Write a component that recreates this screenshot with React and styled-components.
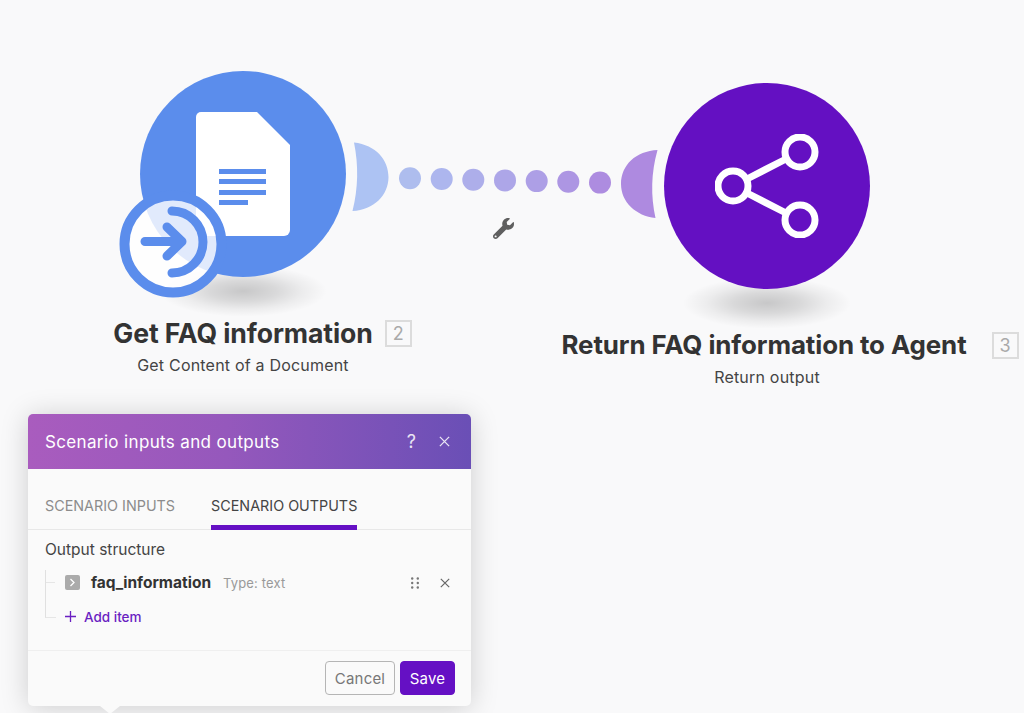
import styled, { createGlobalStyle } from "styled-components";
import { FaWrench } from "react-icons/fa";

const GlobalStyle = createGlobalStyle`
  html, body {
    margin: 0;
    background: #f9f9fa;
    overflow: hidden;
    font-family: Inter, "Liberation Sans", sans-serif;
  }
`;

const Canvas = styled.div`
  position: relative;
  width: 1024px;
  height: 713px;
  overflow: hidden;
  background: #f9f9fa;
  color: #333;
`;

const Node = styled.div`
  position: absolute;
  left: ${(p) => p.$left}px;
  top: ${(p) => p.$top}px;
  width: 206px;
  display: flex;
  flex-direction: column;
  align-items: center;
`;

const Circle = styled.div`
  position: relative;
  z-index: 1;
  width: 206px;
  height: 206px;
  border-radius: 50%;
  background: ${(p) => p.$color};
  display: flex;
  align-items: center;
  justify-content: center;
`;

const Shadow = styled.div`
  width: 170px;
  height: 52px;
  margin-top: -12px;
  border-radius: 50%;
  background: radial-gradient(
    ellipse at center,
    rgba(0, 0, 0, 0.2) 0%,
    rgba(0, 0, 0, 0.13) 28%,
    rgba(0, 0, 0, 0.05) 50%,
    rgba(0, 0, 0, 0) 70%
  );
`;

const Badge = styled.svg`
  position: absolute;
  left: -21px;
  top: 119px;
  width: 108px;
  height: 108px;
`;

const Title = styled.div`
  position: relative;
  left: ${(p) => p.$shift}px;
  font-size: ${(p) => p.$size}px;
  line-height: 32px;
  font-weight: 700;
  letter-spacing: -0.1px;
  white-space: nowrap;
`;

const NumberTag = styled.span`
  position: absolute;
  left: 100%;
  top: 3px;
  margin-left: ${(p) => p.$gap}px;
  width: 27px;
  height: 27px;
  box-sizing: border-box;
  border: 2px solid #dcdcdc;
  color: #aaa;
  font-size: 18px;
  font-weight: 400;
  letter-spacing: 0;
  display: flex;
  align-items: center;
  justify-content: center;
`;

const Subtitle = styled.div`
  margin-top: 6px;
  font-size: 16px;
  line-height: 20px;
  color: #444;
  letter-spacing: 0.2px;
  white-space: nowrap;
`;

const Connector = styled.svg`
  position: absolute;
  left: 340px;
  top: 130px;
  width: 330px;
  height: 100px;
`;

const Wrench = styled(FaWrench)`
  position: absolute;
  left: 493px;
  top: 218px;
  width: 21px;
  height: 21px;
  color: #5f5f5f;
`;

const Dialog = styled.section`
  position: absolute;
  left: 28px;
  top: 414px;
  width: 443px;
  height: 292px;
  display: flex;
  flex-direction: column;
  background: #fafafa;
  border-radius: 5px;
  box-shadow: 0 2px 28px rgba(0, 0, 0, 0.18);

  &::after {
    content: "";
    position: absolute;
    left: 72px;
    top: 100%;
    border-left: 10px solid transparent;
    border-right: 10px solid transparent;
    border-top: 8px solid #fafafa;
  }
`;

const DialogHeader = styled.header`
  height: 55px;
  flex: none;
  padding: 0 21px 0 17px;
  display: flex;
  align-items: center;
  justify-content: space-between;
  border-radius: 5px 5px 0 0;
  background: linear-gradient(90deg, #a95cbe 0%, #9558bc 45%, #6a4fb6 100%);
  color: #fff;
`;

const DialogTitle = styled.h2`
  margin: 0;
  font-size: 17px;
  font-weight: 400;
  letter-spacing: 0.35px;
`;

const HeaderActions = styled.div`
  display: flex;
  align-items: center;
  gap: 23px;
  opacity: 0.85;
  font-size: 18px;
`;

const Tabs = styled.nav`
  height: 61px;
  flex: none;
  padding: 0 17px;
  box-sizing: border-box;
  display: flex;
  align-items: flex-end;
  gap: 36px;
  border-bottom: 1px solid #e8e8e8;
`;

const Tab = styled.div`
  height: 40px;
  box-sizing: border-box;
  border-bottom: 5px solid ${(p) => (p.$active ? "#6510c4" : "transparent")};
  margin-bottom: -1px;
  font-size: 14.35px;
  line-height: 32px;
  color: ${(p) => (p.$active ? "#444" : "#8c8c8c")};
  white-space: nowrap;
`;

const Body = styled.div`
  flex: 1;
  padding: 10px 17px 0;
`;

const SectionLabel = styled.div`
  font-size: 15.5px;
  line-height: 20px;
  color: #444;
`;

const Tree = styled.div`
  position: relative;
  margin-top: 10px;
  padding-left: 20px;

  &::before {
    content: "";
    position: absolute;
    left: 0;
    top: 0;
    width: 10px;
    height: 47px;
    border-left: 1px solid #e0e0e0;
    border-bottom: 1px solid #e6e6e6;
  }
`;

const ItemRow = styled.div`
  position: relative;
  height: 25px;
  display: flex;
  align-items: center;
  padding-right: 4px;

  &::before {
    content: "";
    position: absolute;
    left: -19px;
    top: 12px;
    width: 9px;
    border-top: 1px solid #e6e6e6;
  }
`;

const Toggle = styled.span`
  width: 15px;
  height: 15px;
  border-radius: 2px;
  background: #ababab;
  margin-right: 11px;
  display: flex;
  align-items: center;
  justify-content: center;
`;

const ItemName = styled.span`
  font-size: 15.5px;
  font-weight: 700;
  color: #333;
`;

const ItemType = styled.span`
  margin-left: 12px;
  font-size: 13px;
  color: #999;
  letter-spacing: 0.15px;
`;

const ItemActions = styled.div`
  margin-left: auto;
  display: flex;
  align-items: center;
  gap: 21px;
`;

const AddItem = styled.div`
  margin-top: 9px;
  height: 25px;
  display: flex;
  align-items: center;
  gap: 8px;
  color: #6a1fc2;
  font-size: 13.5px;
  font-weight: 500;
`;

const Footer = styled.footer`
  height: 56px;
  flex: none;
  box-sizing: border-box;
  padding: 10px 16px 0 0;
  border-top: 1px solid #efefef;
  display: flex;
  justify-content: flex-end;
  gap: 5px;
`;

const Button = styled.button`
  height: 34px;
  width: ${(p) => p.$width}px;
  padding: 0;
  box-sizing: border-box;
  border-radius: 4px;
  border: 1px solid ${(p) => (p.$primary ? "#6510c4" : "#b5b5b5")};
  background: ${(p) => (p.$primary ? "#6510c4" : "#fafafa")};
  color: ${(p) => (p.$primary ? "#fff" : "#777")};
  font-family: inherit;
  font-size: 15px;
  letter-spacing: 0.2px;
`;

const dots = [
  { x: 70, y: 48.3, fill: "#aebdee" },
  { x: 101.7, y: 49, fill: "#adb6ee" },
  { x: 133.3, y: 49.7, fill: "#adaeea" },
  { x: 165, y: 50.4, fill: "#ada6e8" },
  { x: 196.7, y: 51.1, fill: "#ad9fe6" },
  { x: 228.3, y: 51.8, fill: "#ad96e3" },
  { x: 260, y: 52.6, fill: "#ad8ce0" },
];

const CloseIcon = ({ size, color }) => (
  <svg width={size} height={size} viewBox="0 0 10 10" fill="none" stroke={color} strokeWidth="1.2">
    <path d="M0.8 0.8 9.2 9.2M9.2 0.8 0.8 9.2" />
  </svg>
);

export default function App() {
  return (
    <Canvas>
      <GlobalStyle />

      <Connector viewBox="340 130 330 100">
        <path d="M354 142.5 C376 145 388.5 160 388.5 177 C388.5 195 374 210 352.5 211 Q361 177 354 142.5 Z" fill="#adc3f3" />
        <path d="M657.5 150 C636 151 621 165 621 184 C621 202 636 216 655.5 218 Q648 184 657.5 150 Z" fill="#ae8ae0" />
        <g transform="translate(340 130)">
          {dots.map((d) => (
            <circle key={d.x} cx={d.x} cy={d.y} r="11" fill={d.fill} />
          ))}
        </g>
      </Connector>
      <Wrench />

      <Node $left={140} $top={71}>
        <Circle $color="#5b8dec">
          <svg width="94" height="124" viewBox="0 0 94 124">
            <path d="M5 0H61L94 33V118a6 6 0 0 1-6 6H6a6 6 0 0 1-6-6V5a5 5 0 0 1 5-5Z" fill="#fff" />
            <path d="M23 57h47v5H23zM23 67h47v5H23zM23 78h47v5H23zM23 88h29v5H23z" fill="#5b8dec" />
          </svg>
          <Badge viewBox="0 0 108 108">
            <circle cx="54" cy="54" r="48.5" fill="rgba(255,255,255,0.82)" stroke="#5b8dec" strokeWidth="10" />
            <g fill="none" stroke="#5b8dec" strokeWidth="9" strokeLinecap="round" strokeLinejoin="round">
              <path d="M26 51.5H63M48 37 63 51.5 48 66" />
              <path d="M53 21A31 31 0 0 1 53 83" />
            </g>
          </Badge>
        </Circle>
        <Shadow />
        <Title $shift={0} $size={26.6}>
          Get FAQ information
          <NumberTag $gap={12}>2</NumberTag>
        </Title>
        <Subtitle>Get Content of a Document</Subtitle>
      </Node>

      <Node $left={664} $top={83}>
        <Circle $color="#6410c2">
          <svg width="104" height="104" viewBox="0 0 104 104" fill="none" stroke="#fff" strokeWidth="7">
            <circle cx="85" cy="18" r="15" />
            <circle cx="18" cy="52" r="15" />
            <circle cx="85" cy="86" r="15" />
            <path d="M32 45 71 25M32 59 71 79" />
          </svg>
        </Circle>
        <Shadow />
        <Title $shift={-3} $size={25.9}>
          Return FAQ information to Agent
          <NumberTag $gap={25}>3</NumberTag>
        </Title>
        <Subtitle>Return output</Subtitle>
      </Node>

      <Dialog>
        <DialogHeader>
          <DialogTitle>Scenario inputs and outputs</DialogTitle>
          <HeaderActions>
            <span>?</span>
            <CloseIcon size={11} color="#fff" />
          </HeaderActions>
        </DialogHeader>
        <Tabs>
          <Tab>SCENARIO INPUTS</Tab>
          <Tab $active>SCENARIO OUTPUTS</Tab>
        </Tabs>
        <Body>
          <SectionLabel>Output structure</SectionLabel>
          <Tree>
            <ItemRow>
              <Toggle>
                <svg width="7" height="9" viewBox="0 0 7 9" fill="none" stroke="#fff" strokeWidth="1.3">
                  <path d="M1.5 1 5 4.5 1.5 8" />
                </svg>
              </Toggle>
              <ItemName>faq_information</ItemName>
              <ItemType>Type: text</ItemType>
              <ItemActions>
                <svg width="8" height="12" viewBox="0 0 8 12" fill="#777">
                  <circle cx="1.2" cy="1.5" r="1.2" />
                  <circle cx="6.8" cy="1.5" r="1.2" />
                  <circle cx="1.2" cy="6" r="1.2" />
                  <circle cx="6.8" cy="6" r="1.2" />
                  <circle cx="1.2" cy="10.5" r="1.2" />
                  <circle cx="6.8" cy="10.5" r="1.2" />
                </svg>
                <CloseIcon size={10} color="#666" />
              </ItemActions>
            </ItemRow>
            <AddItem>
              <svg width="11" height="11" viewBox="0 0 11 11" stroke="#6a1fc2" strokeWidth="1.3">
                <path d="M5.5 0V11M0 5.5H11" />
              </svg>
              Add item
            </AddItem>
          </Tree>
        </Body>
        <Footer>
          <Button $width={70}>Cancel</Button>
          <Button $primary $width={55}>Save</Button>
        </Footer>
      </Dialog>
    </Canvas>
  );
}
